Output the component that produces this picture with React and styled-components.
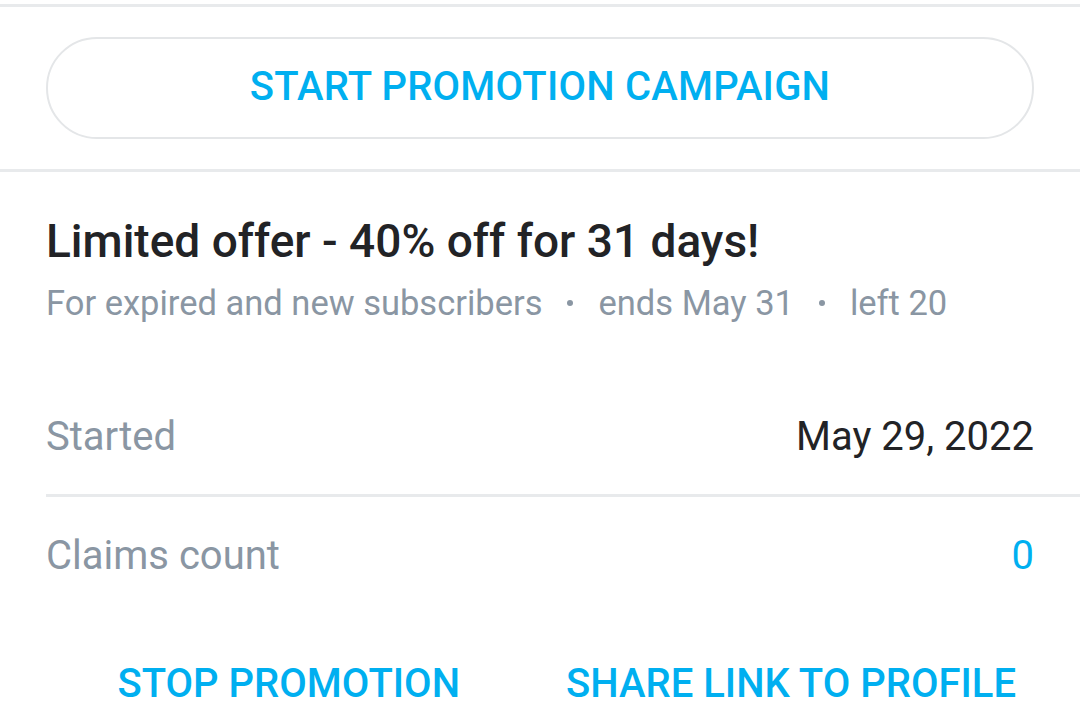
import styled, { createGlobalStyle } from 'styled-components'

const Global = createGlobalStyle`
    html, body {
        margin: 0;
        padding: 0;
        background: #fff;
        font-family: Roboto, "Liberation Sans", sans-serif;
    }
`

const Page = styled.div`
    width: 1080px;
    height: 725px;
    overflow: hidden;
    background: #fff;
`

const Rule = styled.div`
    height: 3px;
    background: #e8eaec;
    margin-top: ${props => props.top || 0}px;
`

const TopBlock = styled.div`
    padding: 30px 46px 30px 46px;
`

const OutlineButton = styled.button`
    display: flex;
    align-items: center;
    justify-content: center;
    width: 100%;
    height: 102px;
    padding-bottom: 4px;
    border: 2px solid #e4e6e8;
    border-radius: 51px;
    background: #fff;
    color: #00aff0;
    font-family: Roboto, "Liberation Sans", sans-serif;
    font-weight: 500;
    font-size: 40px;
    letter-spacing: 0.2px;
`

const Offer = styled.div`
    padding: 44px 46px 0 46px;
`

const Title = styled.h2`
    margin: 0;
    font-size: 46px;
    font-weight: 500;
    color: #222326;
    line-height: 50px;
`

const Meta = styled.div`
    display: flex;
    align-items: center;
    gap: 25px;
    margin-top: 17px;
    font-size: 34.5px;
    color: #8a96a3;
    line-height: 40px;
`

const Dot = styled.span`
    width: 6px;
    height: 6px;
    border-radius: 50%;
    background: #8a96a3;
`

const Rows = styled.div`
    margin-top: 55px;
    padding-left: 46px;
`

const Row = styled.div`
    display: flex;
    justify-content: space-between;
    align-items: center;
    height: 116px;
    padding-right: 46px;
    font-size: 40px;
`

const Label = styled.span`
    color: #8a96a3;
`

const Value = styled.span`
    color: ${props => (props.accent ? '#00aff0' : '#222326')};
`

const Actions = styled.div`
    display: flex;
    justify-content: flex-end;
    gap: 106px;
    padding: 47px 64px 0 0;
`

const TextButton = styled.button`
    border: 0;
    background: none;
    padding: 0;
    color: #00aff0;
    font-family: Roboto, "Liberation Sans", sans-serif;
    font-weight: 500;
    font-size: 40px;
`

export default function App() {
    return (
        <Page>
            <Global />
            <Rule top={4} />
            <TopBlock>
                <OutlineButton>START PROMOTION CAMPAIGN</OutlineButton>
            </TopBlock>
            <Rule />
            <Offer>
                <Title>Limited offer - 40% off for 31 days!</Title>
                <Meta>
                    <span>For expired and new subscribers</span>
                    <Dot />
                    <span>ends May 31</span>
                    <Dot />
                    <span>left 20</span>
                </Meta>
            </Offer>
            <Rows>
                <Row>
                    <Label>Started</Label>
                    <Value>May 29, 2022</Value>
                </Row>
                <Rule />
                <Row>
                    <Label>Claims count</Label>
                    <Value accent>0</Value>
                </Row>
            </Rows>
            <Actions>
                <TextButton>STOP PROMOTION</TextButton>
                <TextButton>SHARE LINK TO PROFILE</TextButton>
            </Actions>
        </Page>
    )
}
